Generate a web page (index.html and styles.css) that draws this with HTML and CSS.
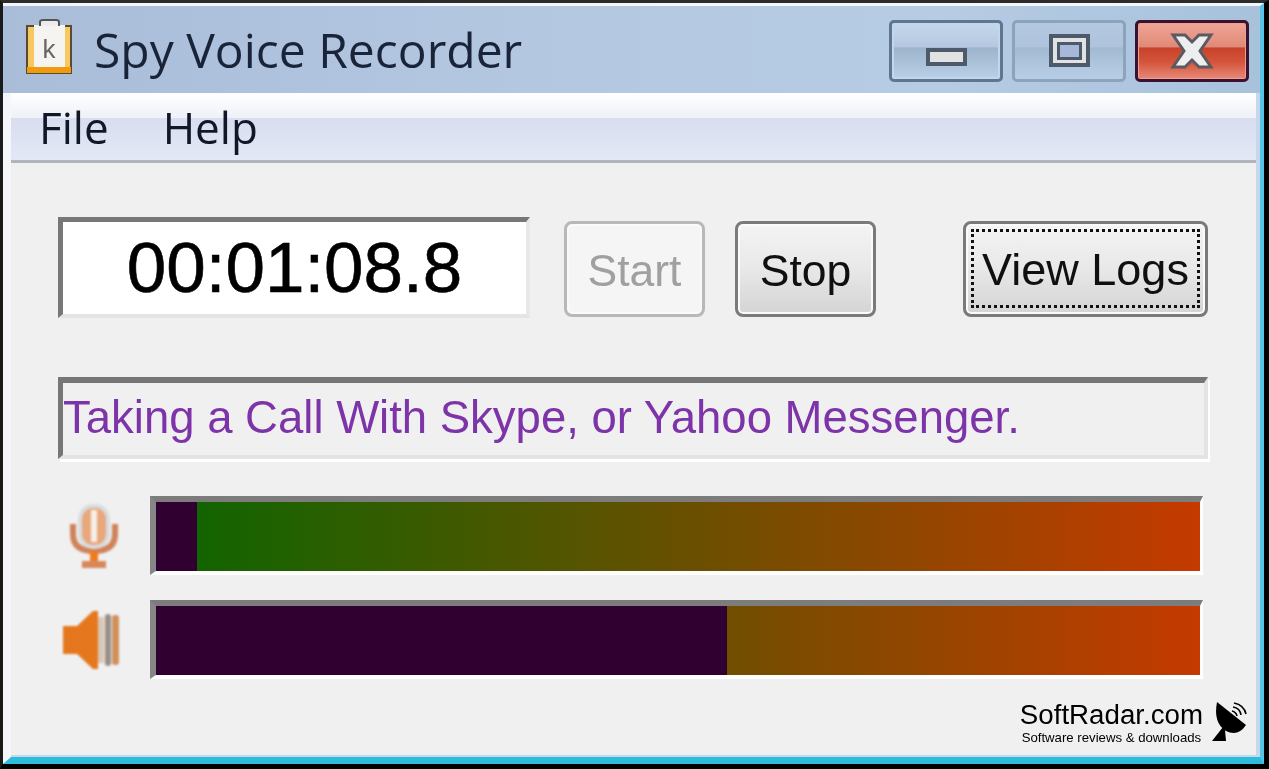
FILE: index.html
```html
<!DOCTYPE html>
<html lang="en">

<head>
    <meta charset="UTF-8">
    <title>Spy Voice Recorder</title>
    <link rel="stylesheet" href="styles.css">
</head>

<body>
    <div class="window">
        <header class="titlebar">
            <svg class="app-icon" width="46" height="56" viewBox="0 0 46 56">
                <rect x="1" y="7" width="44" height="47" fill="#f8c860" stroke="#5a4a30" stroke-width="2"/>
                <rect x="1" y="48" width="44" height="6" fill="#f09a10"/>
                <rect x="8" y="6" width="31" height="42" fill="#f6f4f0"/>
                <path d="M14 7 V3 Q14 1 17 1 H30 Q33 1 33 3 V7" fill="#ececec" stroke="#555" stroke-width="2"/>
                <text x="23" y="39" class="app-icon-k">k</text>
            </svg>
            <h1 class="title">Spy Voice Recorder</h1>
            <div class="caption-buttons">
                <div class="caption-btn">
                    <span class="glyph-min"></span>
                </div>
                <div class="caption-btn caption-btn-off">
                    <span class="glyph-max"></span>
                </div>
                <div class="caption-btn caption-btn-close">
                    <svg width="44" height="36" viewBox="0 0 44 36">
                        <path d="M3 2 H15 L22 9 L29 2 H41 L30 18 L41 34 H29 L22 27 L15 34 H3 L14 18 Z" fill="#eceef0" stroke="#5c5a60" stroke-width="3"/>
                    </svg>
                </div>
            </div>
        </header>

        <div class="client">
            <nav class="menu">
                <span class="menu-item">File</span>
                <span class="menu-item">Help</span>
            </nav>

            <main class="content">
                <div class="top-row">
                    <div class="clock">00:01:08.8</div>
                    <div class="btn btn-disabled btn-start">Start</div>
                    <div class="btn btn-stop">Stop</div>
                    <div class="btn btn-logs"><span class="focus-ring">View Logs</span></div>
                </div>

                <div class="status">Taking a Call With Skype, or Yahoo Messenger.</div>

                <div class="meter-row">
                    <div class="meter-icon meter-icon-mic">
                        <svg width="48" height="64" viewBox="0 0 48 64">
                            <path d="M3 20 V30 Q3 47 24 47 Q45 47 45 30 V20" fill="none" stroke="#d0825a" stroke-width="6"/>
                            <rect x="10" y="2" width="28" height="41" rx="13" fill="#e8a87c" stroke="#d8dce0" stroke-width="4"/>
                            <rect x="21" y="6" width="6" height="32" fill="#f6efe8"/>
                            <rect x="20" y="47" width="8" height="11" fill="#f07a20"/>
                            <rect x="12" y="57" width="24" height="7" fill="#d8875a"/>
                        </svg>
                    </div>
                    <div class="meter">
                        <div class="meter-mask" style="width: 41px"></div>
                    </div>
                </div>

                <div class="meter-row">
                    <div class="meter-icon">
                        <svg width="58" height="60" viewBox="0 0 58 60">
                            <path d="M0 16 H14 L30 1 H35 V59 H30 L14 44 H0 Z" fill="#e5781f"/>
                            <rect x="35" y="7" width="6" height="46" fill="#d8c8b8"/>
                            <rect x="42" y="4" width="6" height="52" rx="3" fill="#9a8f88"/>
                            <rect x="49" y="5" width="7" height="50" rx="3" fill="#d0905c"/>
                        </svg>
                    </div>
                    <div class="meter">
                        <div class="meter-mask" style="width: 571px"></div>
                    </div>
                </div>

                <div class="watermark">
                    <div class="watermark-text">
                        <div class="watermark-name">SoftRadar.com</div>
                        <div class="watermark-sub">Software reviews &amp; downloads</div>
                    </div>
                    <svg class="watermark-dish" width="36" height="41" viewBox="0 0 36 41">
                        <path d="M6 1 L35 24 Q27 36 15 30 Q2 22 6 1 Z" fill="#000"/>
                        <path d="M12 26 L1 40 H15 L14 29 Z" fill="#000"/>
                        <path d="M21 10 Q25 11 26 15 M22 6 Q29 7 30 14 M23 2 Q33 4 35 13" fill="none" stroke="#000" stroke-width="1.6"/>
                    </svg>
                </div>
            </main>
        </div>
    </div>
</body>

</html>
```

FILE: styles.css
```css
* {
    margin: 0;
    padding: 0;
    box-sizing: border-box;
}

body {
    background-color: #000;
    overflow: hidden;
}

.window {
    width: 1269px;
    height: 769px;
    display: flex;
    flex-direction: column;
    border-top: 3px solid #2c2c2c;
    border-left: 3px solid #1a1a1a;
    border-right: 5px solid #000;
    border-bottom: 5px solid #000;
    filter: blur(0.6px);
}

.titlebar {
    height: 90px;
    flex-shrink: 0;
    display: flex;
    align-items: center;
    padding: 3px 11px 0 23px;
    border-top: 3px solid #f4f6fa;
    border-right: 4px solid #58c4e8;
    background: linear-gradient(90deg, #a9bdd9 0%, #b4c8e2 45%, #b6cbe4 75%, #a8c2dc 100%);
}

.app-icon {
    flex-shrink: 0;
    margin-top: -8px;
}

.app-icon-k {
    font-family: "Liberation Sans", sans-serif;
    font-size: 26px;
    fill: #666;
    text-anchor: middle;
}

.title {
    margin-left: 22px;
    margin-top: -4px;
    font-family: "Open Sans", sans-serif;
    font-size: 48px;
    font-weight: 400;
    color: #1a2438;
    white-space: nowrap;
}

.caption-buttons {
    margin-left: auto;
    margin-top: -1px;
    display: flex;
    gap: 9px;
}

.caption-btn {
    width: 114px;
    height: 62px;
    display: flex;
    align-items: center;
    justify-content: center;
    border: 3px solid #5e7690;
    border-radius: 5px;
    box-shadow: inset 0 0 0 2px #c4d6ec;
    background: linear-gradient(180deg, #c6d7ea 0%, #b4c8e0 42%, #9cb4cc 45%, #a6bdd4 62%, #bad0e8 100%);
}

.caption-btn-off {
    border-color: #8ca3bc;
    box-shadow: none;
    background: linear-gradient(180deg, #b4c8e0 0%, #aec3dc 42%, #a2b9d2 45%, #aec4dc 70%, #b8cde6 100%);
}

.caption-btn-close {
    border-color: #3a1230;
    box-shadow: inset 0 0 0 1px #eea090;
    background: linear-gradient(180deg, #f0a596 0%, #e08a78 42%, #c8422a 45%, #d4553c 70%, #e88a78 100%);
}

.glyph-min {
    width: 41px;
    height: 18px;
    margin-top: 13px;
    background-color: #e2e2e2;
    border: 4px solid #4c5a6c;
}

.glyph-max {
    width: 41px;
    height: 33px;
    display: flex;
    align-items: center;
    justify-content: center;
    background-color: #e2e2e2;
    border: 4px solid #4c5a6c;
}

.glyph-max::after {
    content: "";
    width: 19px;
    height: 12px;
    background-color: #a8b8d8;
    border: 3px solid #4c5a6c;
}

.client {
    flex: 1;
    display: flex;
    flex-direction: column;
    border-left: 8px solid #f4f6fa;
    border-right: 4px solid #58c4e8;
    border-bottom: 7px solid #2cbcdc;
    background-color: #f0f0f0;
    box-shadow: inset -4px -2px 0 #c8d8ec;
}

.menu {
    height: 70px;
    flex-shrink: 0;
    display: flex;
    align-items: center;
    gap: 54px;
    padding-left: 28px;
    margin-right: 4px;
    border-bottom: 3px solid #b0b4bc;
    background: linear-gradient(180deg, #ffffff 0%, #eff1f8 37%, #d8deef 38%, #e3e8f6 100%);
}

.menu-item {
    font-family: "Open Sans", sans-serif;
    font-size: 44px;
    color: #101828;
}

.content {
    position: relative;
    flex: 1;
    padding: 54px 52px 0 47px;
}

.top-row {
    display: flex;
    align-items: flex-start;
}

.clock {
    width: 472px;
    height: 101px;
    flex-shrink: 0;
    text-align: center;
    line-height: 92px;
    font-family: "Liberation Sans", sans-serif;
    font-size: 71px;
    color: #000;
    -webkit-text-stroke: 0.6px #000;
    background-color: #fff;
    border-top: 5px solid #777;
    border-left: 5px solid #777;
    border-right: 4px solid #e8e8e8;
    border-bottom: 4px solid #e4e4e4;
}

.btn {
    height: 96px;
    margin-top: 4px;
    padding-top: 3px;
    flex-shrink: 0;
    display: flex;
    align-items: center;
    justify-content: center;
    border: 3px solid #7a7a7a;
    border-radius: 8px;
    font-family: "Liberation Sans", sans-serif;
    font-size: 44.5px;
    color: #101010;
    box-shadow: inset 0 0 0 2px #fafafa;
    background: linear-gradient(180deg, #f4f4f4 0%, #e8e8e8 50%, #d4d4d4 100%);
}

.btn-start {
    width: 141px;
    margin-left: 34px;
}

.btn-disabled {
    color: #a0a0a0;
    border-color: #b8b8b8;
    background: #f5f5f5;
}

.btn-stop {
    width: 141px;
    margin-left: 30px;
}

.btn-logs {
    width: 245px;
    margin-left: 87px;
    padding: 5px 5px 6px;
    font-size: 45px;
}

.focus-ring {
    width: 100%;
    height: 100%;
    padding-top: 3px;
    display: flex;
    align-items: center;
    justify-content: center;
    border: 3px dotted #111;
    white-space: nowrap;
}

.status {
    height: 82px;
    margin-top: 59px;
    line-height: 70px;
    font-family: "Liberation Sans", sans-serif;
    font-size: 45.5px;
    color: #7d34a8;
    white-space: nowrap;
    border-top: 6px solid #767676;
    border-left: 5px solid #767676;
    border-right: 4px solid #e4e4e4;
    border-bottom: 4px solid #e4e4e4;
    box-shadow: 2px 3px 0 #fff;
}

.meter-row {
    display: flex;
    margin-top: 25px;
    margin-right: 5px;
}

.status + .meter-row {
    margin-top: 37px;
}

.meter-icon {
    width: 92px;
    flex-shrink: 0;
    display: flex;
    align-items: center;
    padding-left: 5px;
}

.meter-icon svg {
    filter: blur(1px);
}

.meter-icon-mic {
    padding-left: 12px;
}

.meter {
    flex: 1;
    height: 79px;
    border-top: 6px solid #7c7c7c;
    border-left: 6px solid #868686;
    border-right: 3px solid #fff;
    border-bottom: 4px solid #fff;
    background: linear-gradient(90deg, #0a6600 0%, #c53a00 100%);
}

.meter-mask {
    height: 100%;
    background-color: #300030;
}

.watermark {
    position: absolute;
    right: 13px;
    bottom: 11px;
    display: flex;
    align-items: flex-end;
    gap: 8px;
}

.watermark-text {
    text-align: center;
    font-family: "Liberation Sans", sans-serif;
    color: #000;
}

.watermark-name {
    font-size: 27.7px;
    line-height: 30px;
}

.watermark-sub {
    font-size: 13.2px;
    line-height: 16px;
}

.watermark-dish {
    margin-bottom: 4px;
}
```
